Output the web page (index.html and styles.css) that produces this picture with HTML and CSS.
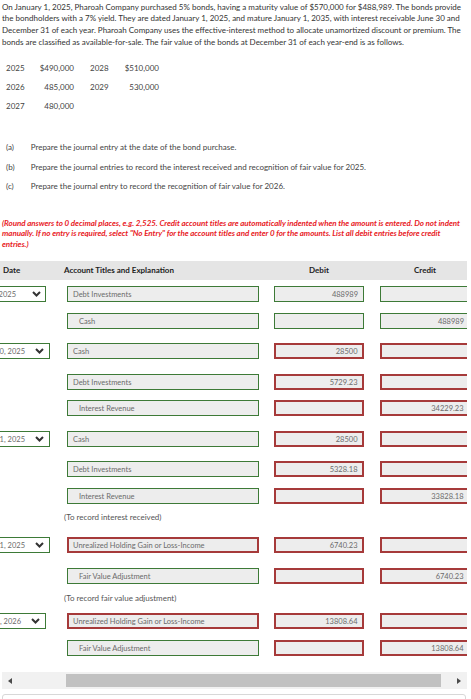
FILE: index.html
```html
<!DOCTYPE html>
<html lang="en">
<head>
<meta charset="utf-8">
<title>Bond journal entries</title>
<link rel="stylesheet" href="styles.css">
</head>
<body>
<p class="intro">On January 1, 2025, Pharoah Company purchased 5% bonds, having a maturity value of $570,000 for $488,989. The bonds provide the bondholders with a 7% yield. They are dated January 1, 2025, and mature January 1, 2035, with interest receivable June 30 and December 31 of each year. Pharoah Company uses the effective-interest method to allocate unamortized discount or premium. The bonds are classified as available-for-sale. The fair value of the bonds at December 31 of each year-end is as follows.</p>

<div class="fv">
  <div class="fv-row"><span>2025</span><span class="r">$490,000</span><span></span><span>2028</span><span class="r">$510,000</span></div>
  <div class="fv-row"><span>2026</span><span class="r">485,000</span><span></span><span>2029</span><span class="r">530,000</span></div>
  <div class="fv-row"><span>2027</span><span class="r">480,000</span></div>
</div>

<div class="parts">
  <div class="part"><span class="lbl">(a)</span><span>Prepare the journal entry at the date of the bond purchase.</span></div>
  <div class="part"><span class="lbl">(b)</span><span>Prepare the journal entries to record the interest received and recognition of fair value for 2025.</span></div>
  <div class="part"><span class="lbl">(c)</span><span>Prepare the journal entry to record the recognition of fair value for 2026.</span></div>
</div>

<p class="note">(Round answers to 0 decimal places, e.g. 2,525. Credit account titles are automatically indented when the amount is entered. Do not indent manually. If no entry is required, select "No Entry" for the account titles and enter 0 for the amounts. List all debit entries before credit entries.)</p>

<div class="viewport">
  <div class="jtable">
    <div class="thead">
      <div class="h-date">Date</div>
      <div class="h-acct">Account Titles and Explanation</div>
      <div class="h-num">Debit</div>
      <div class="h-num h-credit">Credit</div>
    </div>

    <div class="row m6">
      <div class="dcell"><div class="sel w86 wide"><span>Jan. 1, 2025</span><svg class="chev" width="9" height="6" viewBox="0 0 9 6"><path d="M1 1L4.5 4.5L8 1"/></svg></div></div>
      <div class="box acct">Debt Investments</div>
      <div class="box num">488989</div>
      <div class="box num"></div>
    </div>
    <div class="row m11">
      <div class="dcell"></div>
      <div class="box acct ind">Cash</div>
      <div class="box num"></div>
      <div class="box num">488989</div>
    </div>

    <div class="row m14">
      <div class="dcell"><div class="sel w90"><span>June 30, 2025</span><svg class="chev" width="9" height="6" viewBox="0 0 9 6"><path d="M1 1L4.5 4.5L8 1"/></svg></div></div>
      <div class="box acct">Cash</div>
      <div class="box num err">28500</div>
      <div class="box num err"></div>
    </div>
    <div class="row m15">
      <div class="dcell"></div>
      <div class="box acct">Debt Investments</div>
      <div class="box num err">5729.23</div>
      <div class="box num err"></div>
    </div>
    <div class="row m10">
      <div class="dcell"></div>
      <div class="box acct ind">Interest Revenue</div>
      <div class="box num err"></div>
      <div class="box num err">34229.23</div>
    </div>

    <div class="row m15">
      <div class="dcell"><div class="sel w90"><span>Dec. 31, 2025</span><svg class="chev" width="9" height="6" viewBox="0 0 9 6"><path d="M1 1L4.5 4.5L8 1"/></svg></div></div>
      <div class="box acct">Cash</div>
      <div class="box num err">28500</div>
      <div class="box num err"></div>
    </div>
    <div class="row m14">
      <div class="dcell"></div>
      <div class="box acct">Debt Investments</div>
      <div class="box num err">5328.18</div>
      <div class="box num err"></div>
    </div>
    <div class="row m11">
      <div class="dcell"></div>
      <div class="box acct ind">Interest Revenue</div>
      <div class="box num err"></div>
      <div class="box num err">33828.18</div>
    </div>
    <div class="jnote n7">(To record interest received)</div>

    <div class="row m14">
      <div class="dcell"><div class="sel w90"><span>Dec. 31, 2025</span><svg class="chev" width="9" height="6" viewBox="0 0 9 6"><path d="M1 1L4.5 4.5L8 1"/></svg></div></div>
      <div class="box acct err">Unrealized Holding Gain or Loss-Income</div>
      <div class="box num err">6740.23</div>
      <div class="box num err"></div>
    </div>
    <div class="row m15">
      <div class="dcell"></div>
      <div class="box acct ind">Fair Value Adjustment</div>
      <div class="box num err"></div>
      <div class="box num err">6740.23</div>
    </div>
    <div class="jnote n8">(To record fair value adjustment)</div>

    <div class="row m9">
      <div class="dcell"><div class="sel w86"><span>Dec. 31, 2026</span><svg class="chev" width="9" height="6" viewBox="0 0 9 6"><path d="M1 1L4.5 4.5L8 1"/></svg></div></div>
      <div class="box acct err">Unrealized Holding Gain or Loss-Income</div>
      <div class="box num err">13808.64</div>
      <div class="box num err"></div>
    </div>
    <div class="row m11">
      <div class="dcell"></div>
      <div class="box acct ind">Fair Value Adjustment</div>
      <div class="box num err"></div>
      <div class="box num err">13808.64</div>
    </div>
  </div>
</div>

<div class="hscroll">
  <div class="arr"><span class="tri-l"></span></div>
  <div class="thumb"></div>
  <div class="fill"></div>
  <div class="arr"><span class="tri-r"></span></div>
</div>

<div class="bottom-box"></div>
</body>
</html>
```

FILE: styles.css
```css
* { box-sizing: border-box; }

body {
  margin: 0;
  background: #fff;
  font-family: Lato, "Open Sans", Arial, sans-serif;
  color: #333;
}

.intro {
  margin: 0;
  padding: 1.5px 5px 0 2px;
  font-size: 8px;
  line-height: 11.7px;
  color: #333;
}

.fv {
  margin-top: 10px;
  padding-left: 6px;
  font-size: 8px;
  color: #444;
}
.fv-row {
  display: grid;
  grid-template-columns: 24px 44px 16px 24px 45px;
  height: 19px;
  align-items: center;
}
.fv .r { text-align: right; }

.parts {
  margin-top: 22.5px;
  font-size: 8px;
  color: #444;
}
.part {
  display: flex;
  align-items: center;
  height: 19.2px;
  padding-left: 6px;
}
.lbl { width: 24.7px; }

.note {
  margin: 22.5px 0 0;
  padding: 0 8px 0 2px;
  color: #e8211f;
  font-weight: bold;
  font-style: italic;
  font-size: 8px;
  line-height: 10.4px;
  letter-spacing: -0.06px;
}

.viewport {
  margin-top: 11.5px;
  width: 467px;
  overflow: hidden;
}
.jtable {
  margin-left: -40px;
  width: 510px;
}

.thead {
  display: flex;
  align-items: center;
  height: 19.5px;
  background: #e5e5e5;
  font-weight: bold;
  font-size: 8px;
  color: #222;
}
.h-date { width: 104px; padding-left: 43px; }
.h-acct { width: 210px; }
.h-num { width: 90px; text-align: center; }
.h-credit { margin-left: 16px; }

.row {
  display: flex;
  height: 16px;
}
.m6 { margin-top: 6px; }
.m9 { margin-top: 9px; }
.m10 { margin-top: 10px; }
.m11 { margin-top: 11px; }
.m14 { margin-top: 14px; }
.m15 { margin-top: 15px; }

.dcell { width: 107px; flex: none; }

.sel {
  height: 16px;
  display: flex;
  align-items: center;
  justify-content: flex-end;
  gap: 10px;
  padding-right: 5px;
  border: 1px solid #3d7a37;
  background: #fff;
  font-size: 7.5px;
  color: #6b6b6b;
  white-space: nowrap;
}
.sel.wide { gap: 16px; padding-right: 4px; }
.w86 { width: 86px; }
.w90 { width: 90px; }
.chev { flex: none; }
.chev path {
  fill: none;
  stroke: #333;
  stroke-width: 2;
}

.box {
  height: 16px;
  flex: none;
  display: flex;
  align-items: center;
  border: 1px solid #3d7a37;
  background: #ededed;
  font-size: 7.5px;
  color: #6b6b6b;
  white-space: nowrap;
  overflow: hidden;
}
.acct { width: 192px; padding-left: 5px; }
.acct.err { padding-left: 4px; }
.acct.ind { padding-left: 11px; }
.num {
  width: 90px;
  margin-left: 15px;
  justify-content: flex-end;
  padding-right: 5px;
}
.num + .num { margin-left: 16px; }
.box.err {
  border: 2px solid #a63a3a;
}
.num.err { padding-right: 4.5px; }

.jnote {
  height: 12px;
  line-height: 12px;
  padding-left: 104px;
  font-size: 8px;
  color: #555;
}
.n7 { margin-top: 7px; }
.n8 { margin-top: 8px; }

.hscroll {
  margin: 16px 0 0 2px;
  width: 465px;
  height: 17px;
  background: #f1f1f1;
  display: flex;
  align-items: center;
}
.arr {
  width: 16px;
  height: 17px;
  flex: none;
  display: flex;
  align-items: center;
  justify-content: center;
}
.tri-l {
  width: 0;
  height: 0;
  border-top: 3.5px solid transparent;
  border-bottom: 3.5px solid transparent;
  border-right: 4px solid #4a4a4a;
}
.tri-r {
  width: 0;
  height: 0;
  border-top: 3.5px solid transparent;
  border-bottom: 3.5px solid transparent;
  border-left: 4px solid #4a4a4a;
}
.thumb {
  margin-left: 48px;
  width: 375px;
  height: 13px;
  background: #c1c1c1;
  flex: none;
}
.fill { flex: 1; }

.bottom-box {
  margin: 5px 0 0 2px;
  width: 464px;
  height: 20px;
  border: 1px solid #d8d8d8;
  border-radius: 3px;
}
```
